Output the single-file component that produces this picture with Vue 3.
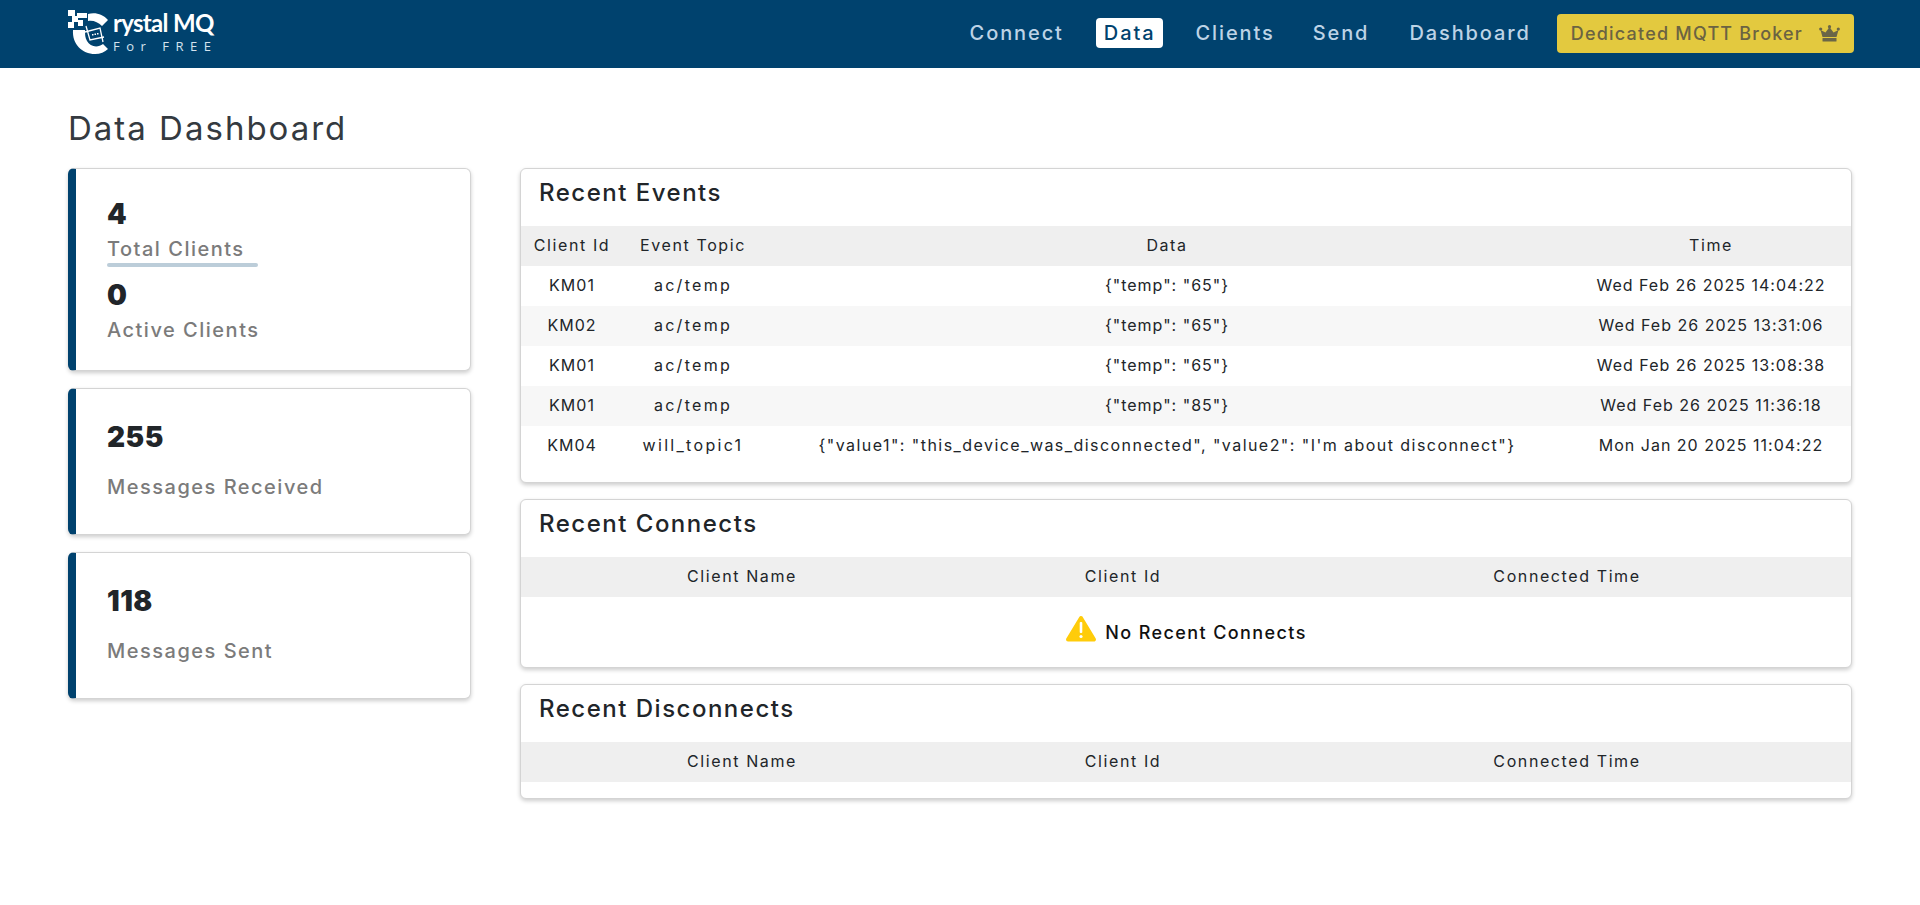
<template>
  <div class="page">
    <header class="navbar">
      <div class="logo">
        <svg class="logo-mark" width="50" height="46" viewBox="0 0 50 46">
          <path fill="#fff" d="M0 0h7v6H0zM9 3h5v5H9zM14 3h5v5h-5zM4 6h6v6H4zM0 12h6v6H0zM10 10h5v6h-5z" />
          <path fill="#fff" d="M20 4 C27 2 35 4 40 10 L34 16 C30 12 25 10 20 11 Z" />
          <path fill="#fff" d="M5 20 C4 34 14 44 27 44 C32 44 37 42 40 39 L35 34 C30 38 22 37 19 31 C17 28 17 24 17 20 Z" />
          <g fill="none" stroke="#fff" stroke-width="1.300">
            <path d="M18 16 L22 30 L36 27" />
            <path d="M17 22 L32 18 L35 32" />
          </g>
          <path fill="#fff" d="M24 24h1.500v1.500H24zM26.500 23.500h1.500V25h-1.500zM29 23h1.500v1.500H29z" />
        </svg>
        <div class="logo-text">
          <span class="logo-name">rystal MQ</span>
          <span class="logo-sub">For FREE</span>
        </div>
      </div>
      <nav class="nav">
        <a v-for="link in links" :key="link" class="nav-link" :class="{ active: link === 'Data' }">{{ link }}</a>
        <a class="upgrade">
          Dedicated MQTT Broker
          <svg width="21" height="17" viewBox="0 0 21 17">
            <path fill="#6a6647" d="M3.500 12 L1.500 5 L6.500 7.500 L10.500 2 L14.500 7.500 L19.500 5 L17.500 12 Z" />
            <circle cx="1.700" cy="4" r="1.600" fill="#6a6647" />
            <circle cx="10.500" cy="1.700" r="1.600" fill="#6a6647" />
            <circle cx="19.300" cy="4" r="1.600" fill="#6a6647" />
            <rect x="3.500" y="13" width="14" height="3.500" rx="0.500" fill="#6a6647" />
          </svg>
        </a>
      </nav>
    </header>

    <main class="content">
      <h1 class="title">Data Dashboard</h1>
      <div class="columns">
        <aside class="stats">
          <div class="stat-card first">
            <div class="stat-num">4</div>
            <div class="stat-label">Total Clients</div>
            <div class="stat-line"></div>
            <div class="stat-num second">0</div>
            <div class="stat-label">Active Clients</div>
          </div>
          <div class="stat-card">
            <div class="stat-num">255</div>
            <div class="stat-label gap">Messages Received</div>
          </div>
          <div class="stat-card">
            <div class="stat-num">118</div>
            <div class="stat-label gap">Messages Sent</div>
          </div>
        </aside>

        <section class="panels">
          <div class="panel">
            <h2>Recent Events</h2>
            <table class="events">
              <thead>
                <tr><th>Client Id</th><th>Event Topic</th><th>Data</th><th>Time</th></tr>
              </thead>
              <tbody>
                <tr v-for="(e, i) in events" :key="i">
                  <td>{{ e.id }}</td>
                  <td>{{ e.topic }}</td>
                  <td :class="{ long: e.data.length > 20 }">{{ e.data }}</td>
                  <td>{{ e.time }}</td>
                </tr>
              </tbody>
            </table>
          </div>

          <div class="panel">
            <h2>Recent Connects</h2>
            <table class="conns">
              <thead>
                <tr><th>Client Name</th><th>Client Id</th><th>Connected Time</th></tr>
              </thead>
            </table>
            <div class="empty">
              <svg width="32" height="27" viewBox="0 0 32 27">
                <path fill="#ffcc0a" stroke="#ffcc0a" stroke-width="4" stroke-linejoin="round" d="M16 3 L29 24.500 L3 24.500 Z" />
                <rect x="14.700" y="7" width="2.600" height="11" rx="1" fill="#fff" />
                <circle cx="16" cy="21.500" r="1.600" fill="#fff" />
              </svg>
              <span>No Recent Connects</span>
            </div>
          </div>

          <div class="panel">
            <h2>Recent Disconnects</h2>
            <table class="conns">
              <thead>
                <tr><th>Client Name</th><th>Client Id</th><th>Connected Time</th></tr>
              </thead>
            </table>
            <div class="tail"></div>
          </div>
        </section>
      </div>
    </main>
  </div>
</template>

<script setup>
const links = ['Connect', 'Data', 'Clients', 'Send', 'Dashboard']

const events = [
  { id: 'KM01', topic: 'ac/temp', data: '{"temp": "65"}', time: 'Wed Feb 26 2025 14:04:22' },
  { id: 'KM02', topic: 'ac/temp', data: '{"temp": "65"}', time: 'Wed Feb 26 2025 13:31:06' },
  { id: 'KM01', topic: 'ac/temp', data: '{"temp": "65"}', time: 'Wed Feb 26 2025 13:08:38' },
  { id: 'KM01', topic: 'ac/temp', data: '{"temp": "85"}', time: 'Wed Feb 26 2025 11:36:18' },
  {
    id: 'KM04',
    topic: 'will_topic1',
    data: '{"value1": "this_device_was_disconnected", "value2": "I\'m about disconnect"}',
    time: 'Mon Jan 20 2025 11:04:22'
  }
]
</script>

<style>
html,
body {
  background: #fff;
}
</style>

<style scoped>
.page {
  min-height: 905px;
  font-family: Inter, "Noto Sans", sans-serif;
  color: #212529;
}

.navbar {
  height: 68px;
  background: #00426e;
  display: flex;
  align-items: center;
  justify-content: space-between;
  padding: 0 66px 0 68px;
  box-sizing: border-box;
}

.logo {
  display: flex;
  align-items: flex-start;
  height: 68px;
  overflow: hidden;
}

.logo-mark {
  margin-top: 10px;
  overflow: visible;
}

.logo-text {
  display: flex;
  flex-direction: column;
  margin-left: -5px;
  font-family: Lato, sans-serif;
  color: #fff;
}

.logo-name {
  font-size: 24px;
  font-weight: 700;
  letter-spacing: -0.700px;
  line-height: 24px;
  margin-top: 11px;
  white-space: nowrap;
}

.logo-sub {
  font-family: "Open Sans", sans-serif;
  font-size: 13px;
  letter-spacing: 6.500px;
  line-height: 15px;
  margin-top: 4px;
  color: #d5e3ef;
  white-space: nowrap;
}

.nav {
  display: flex;
  align-items: center;
  margin-bottom: 2px;
}

.nav-link {
  font-size: 20px;
  font-weight: 500;
  letter-spacing: 1.900px;
  color: #bdd3e6;
  padding: 0 8px;
  height: 30px;
  line-height: 30px;
  border-radius: 4px;
  margin-right: 24px;
}

.nav-link:nth-child(3) {
  margin-right: 22px;
}

.nav-link:nth-child(5) {
  margin-right: 18px;
}

.nav-link.active {
  background: #fff;
  color: #00426e;
}

.upgrade {
  display: flex;
  align-items: center;
  gap: 16px;
  height: 39px;
  padding: 0 14px;
  background: #e3c93f;
  color: #6b6342;
  font-size: 18px;
  font-weight: 500;
  letter-spacing: 1.200px;
  border-radius: 4px;
  white-space: nowrap;
}

.content {
  padding: 0 68px 0 68px;
}

.title {
  margin: 0;
  padding-top: 37px;
  height: 63px;
  line-height: 46px;
  font-size: 33px;
  font-weight: 400;
  letter-spacing: 2px;
  color: #343a40;
}

.columns {
  display: flex;
  gap: 49px;
  align-items: flex-start;
}

.stats {
  width: 403px;
  flex: none;
  display: flex;
  flex-direction: column;
  gap: 17px;
}

.stat-card {
  height: 147px;
  box-sizing: border-box;
  padding: 31px 0 0 31px;
  background: #fff;
  border: 1px solid #d4d4d4;
  border-left: 8px solid #00426e;
  border-radius: 6px;
  box-shadow: 0 2px 4px rgba(0, 0, 0, 0.2);
}

.stat-card.first {
  height: 203px;
  padding-top: 28px;
}

.stat-num {
  font-size: 28px;
  font-weight: 900;
  line-height: 34px;
  letter-spacing: 0.500px;
  color: #212529;
}

.stat-num.second {
  margin-top: 11px;
}

.stat-label {
  font-size: 20px;
  font-weight: 500;
  line-height: 30px;
  letter-spacing: 1.500px;
  color: #7b7b7b;
  margin-top: 3px;
}

.stat-label.gap {
  margin-top: 18px;
}

.stat-line {
  width: 151px;
  height: 4px;
  background: #bccdd9;
  border-radius: 2px;
  margin-top: -1px;
}

.panels {
  flex: 1;
  min-width: 0;
  display: flex;
  flex-direction: column;
  gap: 16px;
}

.panel {
  background: #fff;
  border: 1px solid #d4d4d4;
  border-radius: 6px;
  box-shadow: 0 2px 4px rgba(0, 0, 0, 0.2);
  overflow: hidden;
}

h2 {
  margin: 0;
  height: 57px;
  box-sizing: border-box;
  padding: 6px 0 0 18px;
  font-size: 24px;
  font-weight: 500;
  line-height: 36px;
  letter-spacing: 1.500px;
  color: #212529;
}

table {
  width: 100%;
  border-collapse: collapse;
  table-layout: fixed;
  font-size: 16px;
  letter-spacing: 1px;
}

tr {
  height: 40px;
}

th,
td {
  padding: 0 0 2px;
  text-align: center;
  font-weight: 400;
  white-space: nowrap;
  color: #212529;
}

thead tr {
  background: #efefef;
}

th {
  letter-spacing: 1.600px;
}

tbody tr:nth-child(even) {
  background: #f7f7f7;
}

td:nth-child(2) {
  letter-spacing: 2.300px;
}

td.long {
  letter-spacing: 1.450px;
}

.events {
  margin-bottom: 16px;
}

.events th:nth-child(1) {
  width: 102px;
}

.events th:nth-child(2) {
  width: 140px;
}

.events th:nth-child(4) {
  width: 280px;
}

.conns th:nth-child(1) {
  width: 442px;
}

.conns th:nth-child(2) {
  width: 320px;
}

.empty {
  height: 70px;
  display: flex;
  align-items: center;
  justify-content: center;
  gap: 8px;
  font-size: 18px;
  font-weight: 500;
  letter-spacing: 1.400px;
  color: #111;
}

.empty svg {
  margin-bottom: 7px;
}

.tail {
  height: 16px;
}
</style>
